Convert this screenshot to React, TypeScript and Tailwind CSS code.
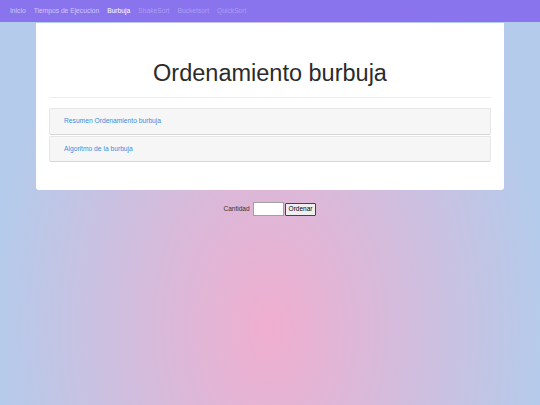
import { useState } from "react";

const NAV_ITEMS = [
  { label: "Inicio", tone: "text-white/60" },
  { label: "Tiempos de Ejecucion", tone: "text-white/60" },
  { label: "Burbuja", tone: "text-white" },
  { label: "ShakeSort", tone: "text-white/30" },
  { label: "Bucketsort", tone: "text-white/30" },
  { label: "QuickSort", tone: "text-white/30" },
];

const PANELS = ["Resumen Ordenamiento burbuja", "Algoritmo de la burbuja"];

export default function App() {
  const [cantidad, setCantidad] = useState("");

  return (
    <div className="min-h-[405px] w-full font-['Liberation_Sans',Arial,sans-serif] bg-[#b5cbeb] bg-[radial-gradient(ellipse_275px_430px_at_50%_328px,#f0aecf_0%,#b5cbeb_100%)]">
      {/* Navbar */}
      <nav className="flex h-[22px] items-center gap-[8px] bg-[#8a74ee] px-[10px] text-[6.7px]">
        {NAV_ITEMS.map((item) => (
          <a key={item.label} className={`${item.tone} whitespace-nowrap`}>
            {item.label}
          </a>
        ))}
      </nav>

      {/* Main card */}
      <div className="mx-[36px] mt-[1px] rounded-b-[3px] bg-white px-[13px] pb-[28px]">
        <h1 className="pt-[36px] text-center text-[23.5px] leading-[28px] text-[#2b2b2b]">
          Ordenamiento burbuja
        </h1>
        <hr className="mt-[10px] border-t border-[#eeeeee]" />
        <div className="mt-[10px] flex flex-col gap-[1px]">
          {PANELS.map((title) => (
            <div
              key={title}
              className="flex h-[26.5px] items-center rounded-[2px] border border-[#e6e6e6] border-b-[#d6d6d6] bg-[#f6f6f6] px-[14px]"
            >
              <a className="text-[6.7px] text-[#3a8de2]">{title}</a>
            </div>
          ))}
        </div>
      </div>

      {/* Form */}
      <form
        className="mt-[12px] flex items-center justify-center text-[6.5px] text-[#333]"
        onSubmit={(e) => e.preventDefault()}
      >
        <label className="mr-[3px]">Cantidad</label>
        <input
          value={cantidad}
          onChange={(e) => setCantidad(e.target.value)}
          className="h-[14px] w-[31px] border border-[#a0a0a0] bg-white px-[2px] text-[6.5px]"
        />
        <button className="ml-[1px] h-[13px] rounded-[1px] border border-[#444] bg-[#efefef] px-[3px] text-[6.5px] leading-none text-black">
          Ordenar
        </button>
      </form>
    </div>
  );
}
